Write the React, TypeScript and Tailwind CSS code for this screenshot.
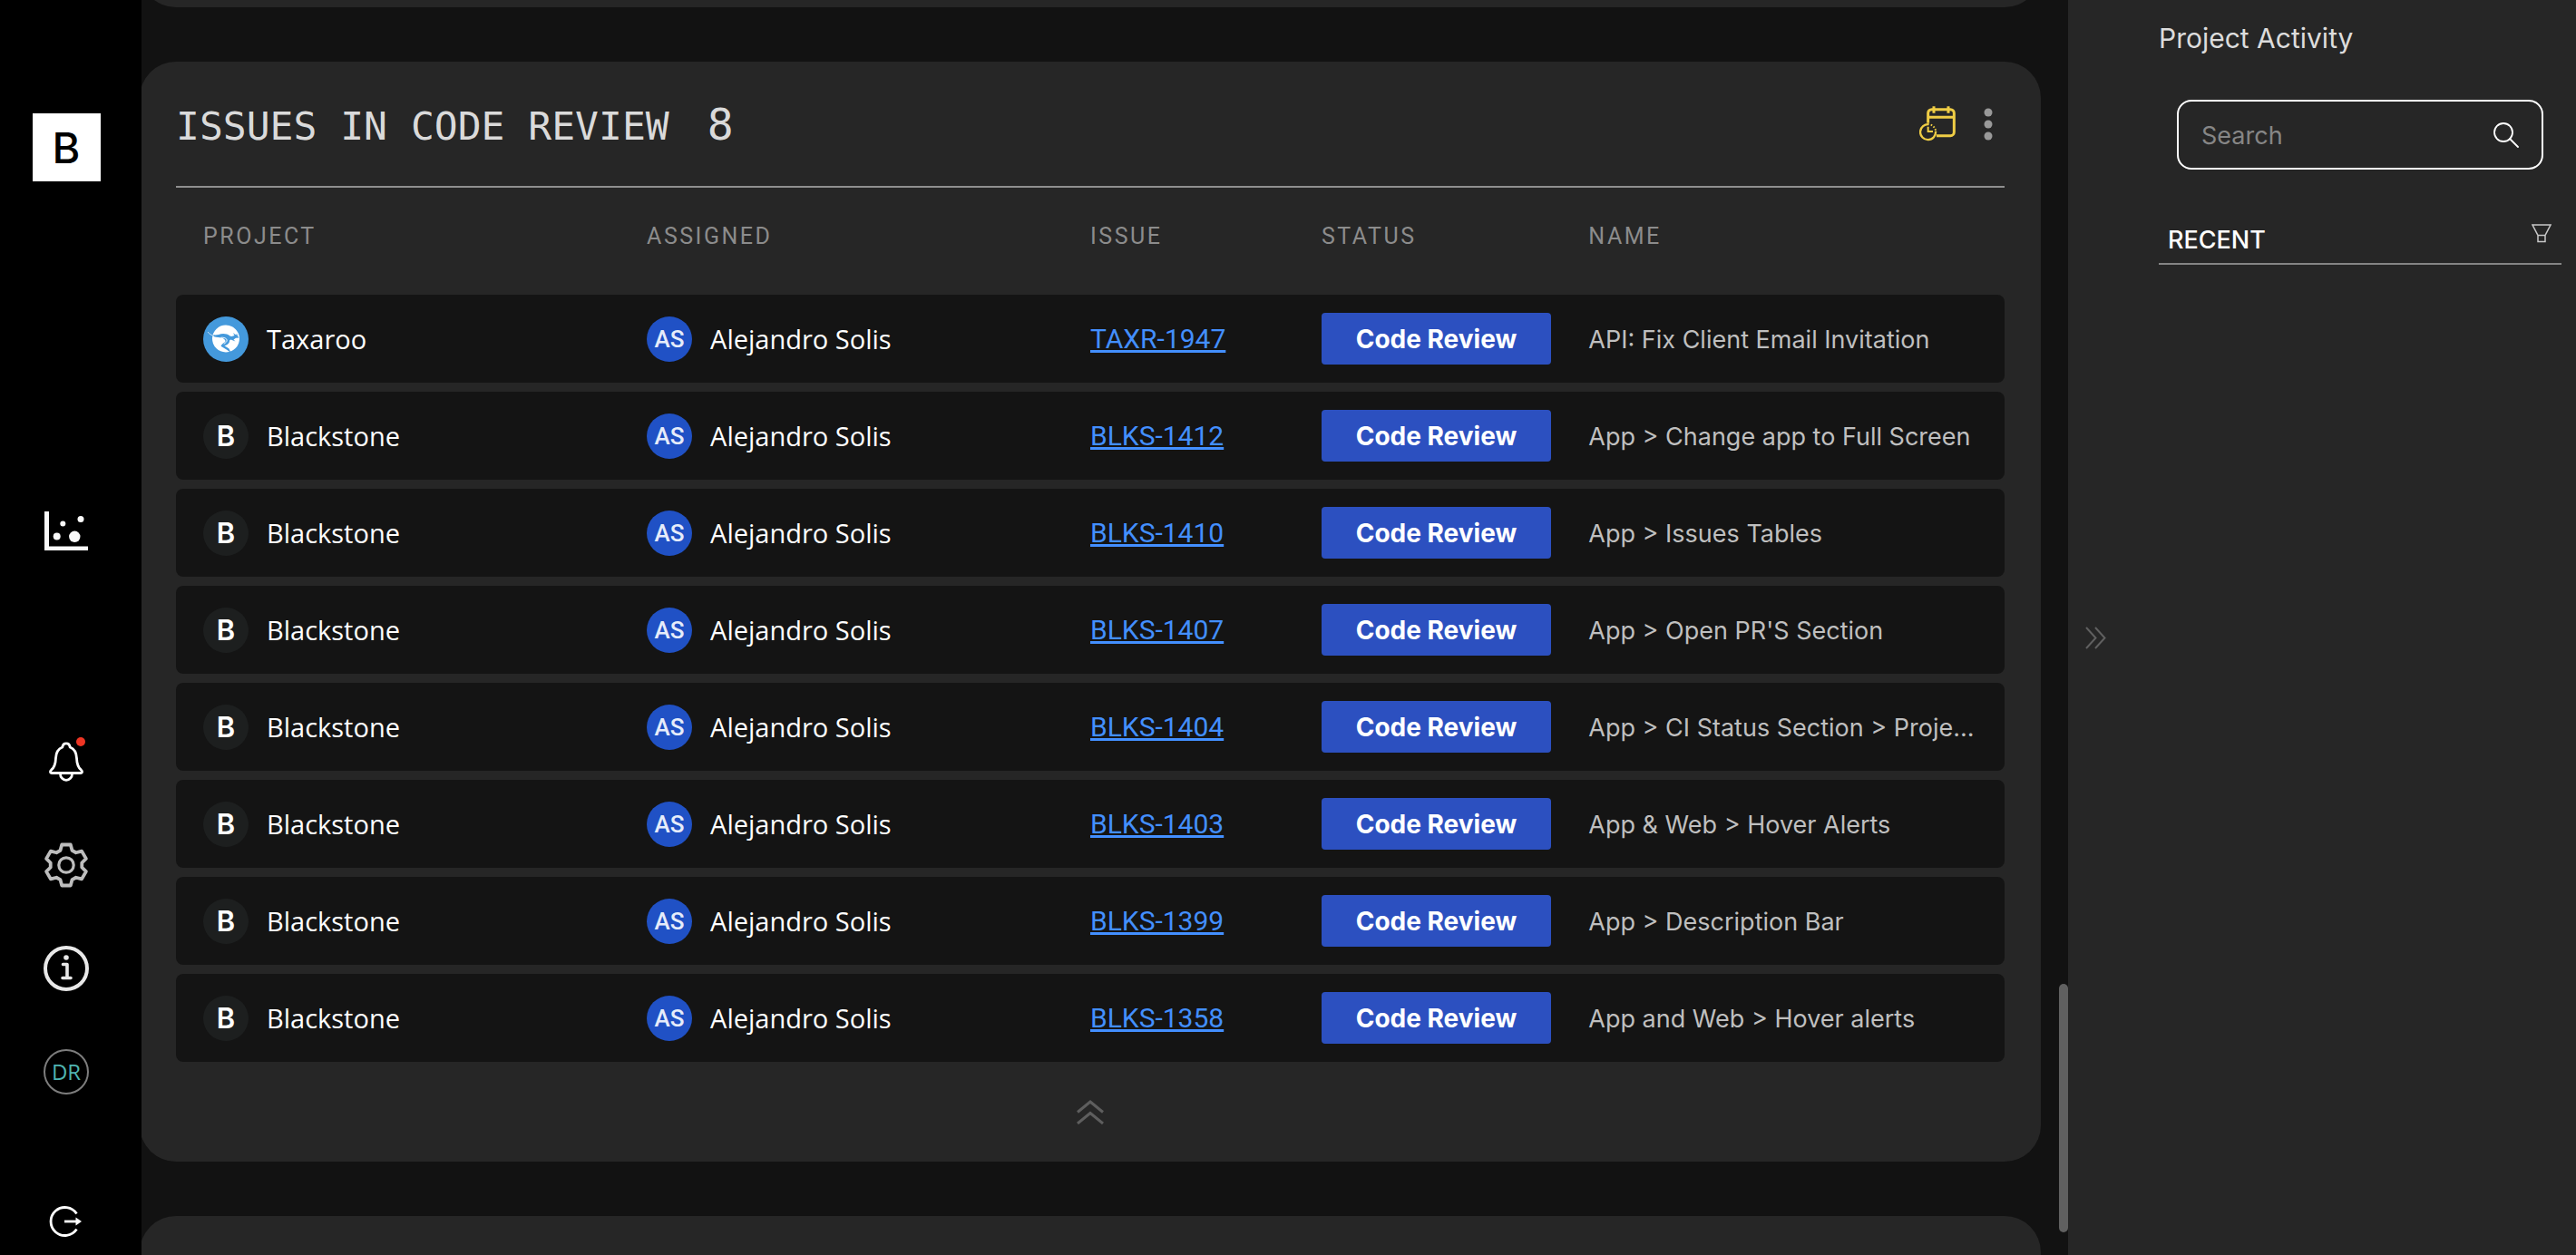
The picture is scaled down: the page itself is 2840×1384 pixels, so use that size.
type Issue = { project: string; key: string; name: string };

const issues: Issue[] = [
  { project: "Taxaroo", key: "TAXR-1947", name: "API: Fix Client Email Invitation" },
  { project: "Blackstone", key: "BLKS-1412", name: "App > Change app to Full Screen" },
  { project: "Blackstone", key: "BLKS-1410", name: "App > Issues Tables" },
  { project: "Blackstone", key: "BLKS-1407", name: "App > Open PR'S Section" },
  { project: "Blackstone", key: "BLKS-1404", name: "App > CI Status Section > Proje..." },
  { project: "Blackstone", key: "BLKS-1403", name: "App & Web > Hover Alerts" },
  { project: "Blackstone", key: "BLKS-1399", name: "App > Description Bar" },
  { project: "Blackstone", key: "BLKS-1358", name: "App and Web > Hover alerts" },
];

// Six-toothed gear outline: one tooth profile rotated in steps of 60 degrees.
const tooth = [
  [-6.5, -16.2],
  [-4.8, -22.5],
  [4.8, -22.5],
  [6.5, -16.2],
];
const gearPath =
  "M" +
  [0, 1, 2, 3, 4, 5]
    .flatMap((k) => {
      const a = (k * Math.PI) / 3;
      return tooth.map(
        ([x, y]) =>
          `${(25 + x * Math.cos(a) - y * Math.sin(a)).toFixed(2)} ${(25 + x * Math.sin(a) + y * Math.cos(a)).toFixed(2)}`
      );
    })
    .join("L") +
  "Z";

function ChartIcon() {
  return (
    <svg viewBox="0 0 50 50" className="size-[50px]" fill="#fafafa">
      <path d="M1 4h5v38.500h43v4.500h-48z" />
      <circle cx="14.700" cy="31.400" r="4" />
      <circle cx="21.300" cy="17.600" r="3" />
      <circle cx="41" cy="12.600" r="3.500" />
      <circle cx="34.300" cy="31.800" r="6.200" />
    </svg>
  );
}

function BellIcon() {
  return (
    <svg viewBox="0 0 50 50" className="size-[50px] overflow-visible" fill="none" stroke="#fff" strokeWidth="2.800" strokeLinejoin="round">
      <path d="M9 37.500C7 37.500 7 35.500 8.500 34.200C12.500 31 13.300 27 13.500 21C13.800 14 17 10.500 20.800 9C21.500 3.500 28.500 3.500 29.200 9C33 10.500 36.200 14 36.500 21C36.700 27 37.500 31 41.500 34.200C43 35.500 43 37.500 41 37.500Z" />
      <path d="M18.500 38.500a6.500 6.800 0 0 0 13 0" />
      <circle cx="41" cy="3" r="5" fill="#ee3524" stroke="none" />
    </svg>
  );
}

function GearIcon() {
  return (
    <svg viewBox="0 0 50 50" className="size-[50px]" fill="none" stroke="#bdbdbd" strokeWidth="3.800" strokeLinejoin="round">
      <path d={gearPath} />
      <circle cx="25" cy="25" r="8.200" strokeWidth="3.200" />
    </svg>
  );
}

function InfoIcon() {
  return (
    <svg viewBox="0 0 50 50" className="size-[50px]" fill="none" stroke="#e8e8e8" strokeWidth="4" strokeLinecap="round">
      <circle cx="25" cy="25" r="23" />
      <circle cx="25" cy="13" r="2.800" fill="#e8e8e8" stroke="none" />
      <path d="M21.500 20.500h4.500v14.500M21 35.500h9" strokeWidth="3.600" strokeLinejoin="round" />
    </svg>
  );
}

function LogoutIcon() {
  return (
    <svg viewBox="0 0 50 50" className="size-[50px]" fill="none" stroke="#fff" strokeWidth="2.800">
      <path d="M36.500 16.500A15.500 15.500 0 1 0 36.500 33.500" />
      <path d="M23 25h14" />
      <path d="M35.500 20.500l6.500 4.500l-6.500 4.500z" fill="#fff" stroke="none" />
    </svg>
  );
}

function CalendarClockIcon() {
  return (
    <svg viewBox="48 50 120 117" className="h-[39px] w-[40px]" fill="none" stroke="#efcd45" strokeWidth="9">
      <path d="M77 106V73a12 12 0 0 1 12-12h62a12 12 0 0 1 12 12v63a12 12 0 0 1-12 12h-46" />
      <path d="M77 87h86M96 51v22M144 51v22" />
      <path d="M102 133A25.500 25.500 0 1 1 80 110.500" strokeWidth="7" />
      <path d="M86 112A25.500 25.500 0 0 1 102 130" strokeWidth="6" strokeDasharray="5 5" />
      <path d="M77 118v16h16" strokeWidth="6" />
    </svg>
  );
}

function TaxarooLogo() {
  return (
    <svg viewBox="0 0 50 50" className="size-[50px] shrink-0">
      <circle cx="25" cy="25" r="25" fill="#4499dc" />
      <circle cx="25" cy="24.500" r="15" fill="#fff" />
      <path
        fill="#4499dc"
        d="M5 17C8 20 12 21 17 20C21 18.500 26 18.600 29.500 21.500C31.500 22.500 33 21.500 34.500 21L33 18.200L36.500 20.500L37 18.500L38 21.500L39.500 23.500L36 23.800L33.500 25.500L35.500 27.500L30.500 25.500L29 26.500C29.500 29 27 31 23.500 32.200L28.500 35.500L30.500 40L26.500 37L19.500 32.800C20 30.500 23.500 29 24.500 27.500C24.500 25.500 23 24.500 20.500 23.500C15 23 9 22.500 5 17Z"
      />
      <path d="M5 17C7 19.500 9 20.700 12 21.300" fill="none" stroke="#fff" strokeWidth="0.700" />
      <path d="M19.500 23.200C23 23 25.800 24 26.200 26C26.200 28 24.500 29.200 22.800 30.300" fill="none" stroke="#fff" strokeWidth="0.900" />
    </svg>
  );
}

function ProjectAvatar({ project }: { project: string }) {
  if (project === "Taxaroo") return <TaxarooLogo />;
  return (
    <span className="flex size-[50px] shrink-0 items-center justify-center rounded-full bg-[#1d1f1f] font-['Inter',sans-serif] text-[31px] leading-none font-semibold text-white">
      B
    </span>
  );
}

function Sidebar() {
  return (
    <nav className="flex w-[156px] shrink-0 flex-col items-center bg-black pt-[125px] pr-[10px]">
      <a
        href="#home"
        aria-label="Home"
        className="flex size-[75px] items-center justify-center bg-white font-['Inter',sans-serif] text-[47px] leading-none font-medium text-black"
      >
        B
      </a>
      <button aria-label="Metrics" className="mt-[360px]">
        <ChartIcon />
      </button>
      <div className="mt-[205px] flex flex-col gap-16">
        <button aria-label="Notifications">
          <BellIcon />
        </button>
        <button aria-label="Settings">
          <GearIcon />
        </button>
        <button aria-label="Information">
          <InfoIcon />
        </button>
        <button className="flex size-[50px] items-center justify-center rounded-full border-2 border-[#7d7d7d] font-['Open_Sans',sans-serif] text-[24px] leading-none text-[#4fb4b1]">
          DR
        </button>
      </div>
      <button aria-label="Log out" className="mt-[115px]">
        <LogoutIcon />
      </button>
    </nav>
  );
}

function IssueTable() {
  return (
    <table className="w-full table-fixed border-separate border-spacing-x-0 border-spacing-y-[10px] text-left">
      <colgroup>
        <col className="w-[25.75%]" />
        <col className="w-[24.25%]" />
        <col className="w-[12.65%]" />
        <col className="w-[14.6%]" />
        <col />
      </colgroup>
      <thead>
        <tr className="font-['Roboto',sans-serif] text-[25px] tracking-widest text-[#8c8c8c]">
          <th className="h-[98px] p-0 pb-[10px] pl-[30px] font-normal">PROJECT</th>
          <th className="p-0 pb-[10px] font-normal">ASSIGNED</th>
          <th className="p-0 pb-[10px] font-normal">ISSUE</th>
          <th className="p-0 pb-[10px] font-normal">STATUS</th>
          <th className="p-0 pb-[10px] font-normal">NAME</th>
        </tr>
      </thead>
      <tbody>
        {issues.map((issue) => (
          <tr key={issue.key}>
            <td className="h-[97px] rounded-l-lg bg-[#141414] p-0 pl-[30px]">
              <div className="flex items-center gap-5">
                <ProjectAvatar project={issue.project} />
                <span className="font-['Open_Sans',sans-serif] text-[29px] leading-10 text-white">{issue.project}</span>
              </div>
            </td>
            <td className="bg-[#141414] p-0">
              <div className="flex items-center gap-5">
                <span className="flex size-[50px] shrink-0 items-center justify-center rounded-full bg-[#2051c5] font-['Roboto',sans-serif] text-[26px] leading-none font-medium text-[#e6ecfa]">
                  AS
                </span>
                <span className="font-['Open_Sans',sans-serif] text-[29px] leading-10 text-white">Alejandro Solis</span>
              </div>
            </td>
            <td className="bg-[#141414] p-0">
              <a
                href={"#" + issue.key}
                className="font-['Roboto',sans-serif] text-[30px] leading-10 text-[#438fff] underline decoration-[3px] underline-offset-[2px]"
              >
                {issue.key}
              </a>
            </td>
            <td className="bg-[#141414] p-0">
              <button className="flex h-[57px] w-[253px] items-center justify-center rounded bg-[#2c50c0] font-['Inter',sans-serif] text-[28px] leading-none font-bold text-white">
                Code Review
              </button>
            </td>
            <td className="truncate rounded-r-lg bg-[#141414] p-0 pt-1 pr-5 font-['Inter',sans-serif] text-[27px] text-[#bfbfbf]">
              {issue.name}
            </td>
          </tr>
        ))}
      </tbody>
    </table>
  );
}

function CodeReviewCard() {
  return (
    <section className="rounded-[40px] bg-[#262626] px-10">
      <header className="flex h-[139px] items-center justify-between border-b-2 border-[#8f8f8f] pr-[14px]">
        <h2 className="flex items-baseline gap-[42px] font-['DejaVu_Sans_Mono',monospace] text-[#dadada]">
          <span className="text-[43px]">ISSUES IN CODE REVIEW</span>
          <span className="text-[48px]">8</span>
        </h2>
        <div className="flex items-center gap-8">
          <button aria-label="Schedule">
            <CalendarClockIcon />
          </button>
          <button aria-label="More options">
            <svg viewBox="0 0 8 36" className="h-[36px] w-[8px] overflow-visible" fill="#999">
              <circle cx="4" cy="5" r="4.500" />
              <circle cx="4" cy="18" r="4.500" />
              <circle cx="4" cy="31" r="4.500" />
            </svg>
          </button>
        </div>
      </header>
      <IssueTable />
      <button aria-label="Collapse list" className="flex h-[100px] w-full items-center justify-center pb-[11px]">
        <svg viewBox="0 0 30 28" className="h-[28px] w-[30px]" fill="none" stroke="#5e5e5e" strokeWidth="3">
          <path d="M1 14.500L15 3l14 11.500M1 27L15 15.500L29 27" />
        </svg>
      </button>
    </section>
  );
}

function ActivityPanel() {
  return (
    <aside className="flex w-[560px] shrink-0 bg-[#262626] pr-4 font-['Inter',sans-serif]">
      <button aria-label="Collapse panel" className="flex w-[100px] shrink-0 items-center pt-[22px] pl-[19px]">
        <svg viewBox="0 0 23 25" className="h-[25px] w-[23px]" fill="none" stroke="#606060" strokeWidth="2">
          <path d="M1 1l10.500 11.500L1 24M11 1l10.500 11.500L11 24" />
        </svg>
      </button>
      <div className="min-w-0 flex-1 pt-[22px]">
        <h2 className="text-[30px] leading-10 font-normal text-[#dcdcdc]">Project Activity</h2>
        <label className="mx-5 mt-12 flex h-[77px] items-center rounded-2xl border-2 border-white pr-[25px] pl-[25px]">
          <input
            type="text"
            placeholder="Search"
            aria-label="Search"
            className="min-w-0 flex-1 bg-transparent pt-1 text-[27px] text-white outline-none placeholder:text-[#868686]"
          />
          <svg viewBox="0 0 28 28" className="size-[28px] shrink-0" fill="none" stroke="#fff" strokeWidth="1.800" strokeLinecap="round">
            <circle cx="11" cy="11" r="10" />
            <path d="M18 18l9 9" />
          </svg>
        </label>
        <div className="flex h-[105px] items-start justify-between border-b-2 border-[#848484] pt-[60px] pr-[11px] pl-[10px]">
          <h3 className="text-[27px] leading-9 font-medium text-white">RECENT</h3>
          <button aria-label="Filter activity">
            <svg viewBox="0 0 22 21" className="h-[21px] w-[22px]" fill="none" stroke="#c8c8c8" strokeWidth="1.500">
              <path d="M1 1h20l-6 11.500h-8zM7 12.500h8v7h-8z" />
            </svg>
          </button>
        </div>
      </div>
    </aside>
  );
}

export default function App() {
  return (
    <div className="flex h-screen overflow-hidden bg-[#121212]">
      <Sidebar />
      <main className="flex min-w-0 flex-1 overflow-hidden">
        <div className="-mt-10 -ml-[2px] flex min-w-0 flex-1 flex-col gap-[60px] pr-5">
          <section className="h-12 shrink-0 rounded-b-[40px] bg-[#262626]" />
          <CodeReviewCard />
          <section className="h-[200px] shrink-0 rounded-t-[40px] bg-[#262626]" />
        </div>
        <div className="flex w-[10px] shrink-0 flex-col justify-end pb-[25px]">
          <div className="h-[274px] rounded-full bg-[#606060]" />
        </div>
      </main>
      <ActivityPanel />
    </div>
  );
}
